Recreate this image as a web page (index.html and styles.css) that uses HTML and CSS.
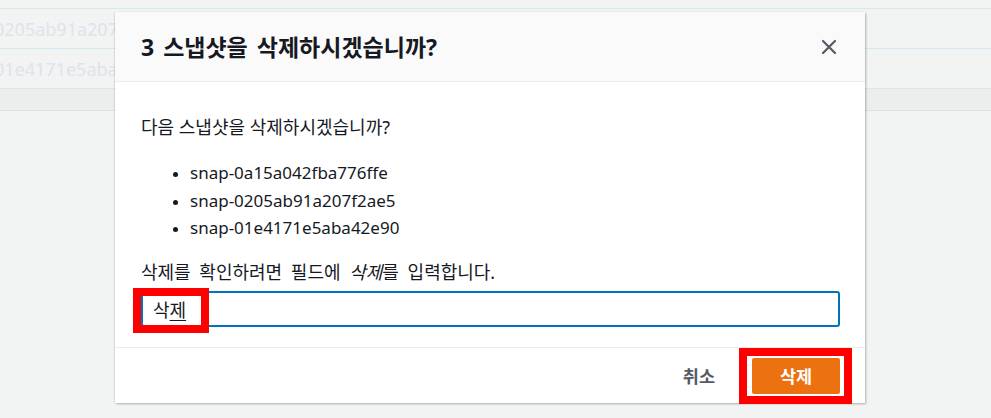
FILE: index.html
```html
<!DOCTYPE html>
<html lang="ko">
<head>
<meta charset="utf-8">
<title>스냅샷 삭제</title>
<link rel="stylesheet" href="styles.css">
</head>
<body>
<div class="page">
  <div class="table">
    <div class="row"><span class="cell">0205ab91a207f2ae5</span></div>
    <div class="row"><span class="cell">01e4171e5aba42e90</span></div>
    <div class="row row-head"></div>
  </div>
</div>

<div class="modal" role="dialog">
  <div class="modal-header">
    <h2 class="modal-title">3 스냅샷을 삭제하시겠습니까?</h2>
    <button class="close" aria-label="닫기">
      <svg width="16" height="16" viewBox="0 0 16 16"><path d="M2 2 L14 14 M14 2 L2 14" stroke="#545b64" stroke-width="2.2" stroke-linecap="round" fill="none"/></svg>
    </button>
  </div>
  <div class="modal-body">
    <p class="intro">다음 스냅샷을 삭제하시겠습니까?</p>
    <ul class="ids">
      <li>snap-0a15a042fba776ffe</li>
      <li>snap-0205ab91a207f2ae5</li>
      <li>snap-01e4171e5aba42e90</li>
    </ul>
    <p class="hint">삭제를 확인하려면 필드에 <em>삭제</em>를 입력합니다.</p>
    <div class="field">
      <div class="input"><span>삭</span><span class="composing">제</span></div>
      <span class="mark mark-input"></span>
    </div>
  </div>
  <div class="modal-footer">
    <button class="btn-cancel">취소</button>
    <div class="btn-wrap">
      <button class="btn-primary">삭제</button>
      <span class="mark mark-btn"></span>
    </div>
  </div>
</div>
</body>
</html>
```
FILE: styles.css
```css
* { box-sizing: border-box; }
html, body { margin: 0; padding: 0; }
body {
  width: 991px;
  height: 418px;
  overflow: hidden;
  background: #f2f3f3;
  font-family: "Noto Sans", "Noto Sans CJK KR", sans-serif;
  position: relative;
}
.page { padding-top: 8px; }
.table { display: flex; flex-direction: column; }
.row {
  height: 40px;
  border-top: 1px solid #d4e8f1;
  display: flex;
  align-items: center;
  overflow: hidden;
}
.cell {
  margin-left: -6px;
  font-size: 18px;
  color: #dde4ea;
  white-space: nowrap;
}
.row-head {
  height: 23px;
  background: #eceeee;
  border-bottom: 1px solid #dfe1e1;
}

.modal {
  position: absolute;
  left: 115px;
  top: 12px;
  width: 750px;
  background: #fff;
  box-shadow: 1px 1px 2px rgba(0,0,0,0.28), -1px 0 1px rgba(0,0,0,0.08);
}
.modal-header {
  height: 70px;
  background: #fafafa;
  border-bottom: 1px solid #eaeded;
  display: flex;
  align-items: center;
  justify-content: space-between;
  padding: 0 25px 0 26px;
}
.modal-title {
  margin: 0;
  font-size: 23px;
  line-height: 30px;
  font-weight: 700;
  color: #16191f;
  word-spacing: 3px;
}
.close {
  width: 22px;
  height: 22px;
  padding: 0;
  border: 0;
  background: none;
  display: flex;
  align-items: center;
  justify-content: center;
}
.modal-body {
  padding: 25px 25px 20px 26px;
  color: #16191f;
  font-size: 18px;
}
.intro {
  margin: 8px 0 0;
  line-height: 25px;
}
.ids {
  margin: 19px 0 0;
  padding-left: 49px;
  line-height: 27.5px;
  font-size: 17px;
}
.ids li::marker { font-size: 15px; }
.hint {
  margin: 18px 0 0;
  line-height: 25px;
  word-spacing: 4px;
}
.hint em { font-style: italic; }
.field {
  position: relative;
  margin-top: 6.5px;
}
.input {
  height: 36px;
  border: 2px solid #0073bb;
  border-radius: 3px;
  padding: 0 10px;
  display: flex;
  align-items: center;
  font-size: 18px;
  color: #16191f;
}
.composing {
  text-decoration: underline;
  text-underline-offset: 3px;
}
.mark {
  position: absolute;
  border: 8px solid #ff0000;
  pointer-events: none;
}
.mark-input {
  left: -8px;
  top: -3px;
  width: 76px;
  height: 45px;
}
.modal-footer {
  height: 56px;
  border-top: 1px solid #eaeded;
  display: flex;
  align-items: center;
  justify-content: flex-end;
  padding: 0 25px;
}
.btn-cancel {
  border: 0;
  background: none;
  font-family: inherit;
  font-size: 17.5px;
  font-weight: 700;
  color: #545b64;
  padding: 0 20px;
  height: 36px;
  margin-right: 17px;
}
.btn-wrap { position: relative; }
.btn-primary {
  width: 88px;
  height: 36px;
  border: 0;
  border-radius: 2px;
  background: #ec7211;
  color: #fff;
  font-family: inherit;
  font-size: 17.5px;
  font-weight: 700;
  display: block;
}
.mark-btn {
  left: -13px;
  top: -10px;
  width: 113px;
  height: 56px;
}
```
